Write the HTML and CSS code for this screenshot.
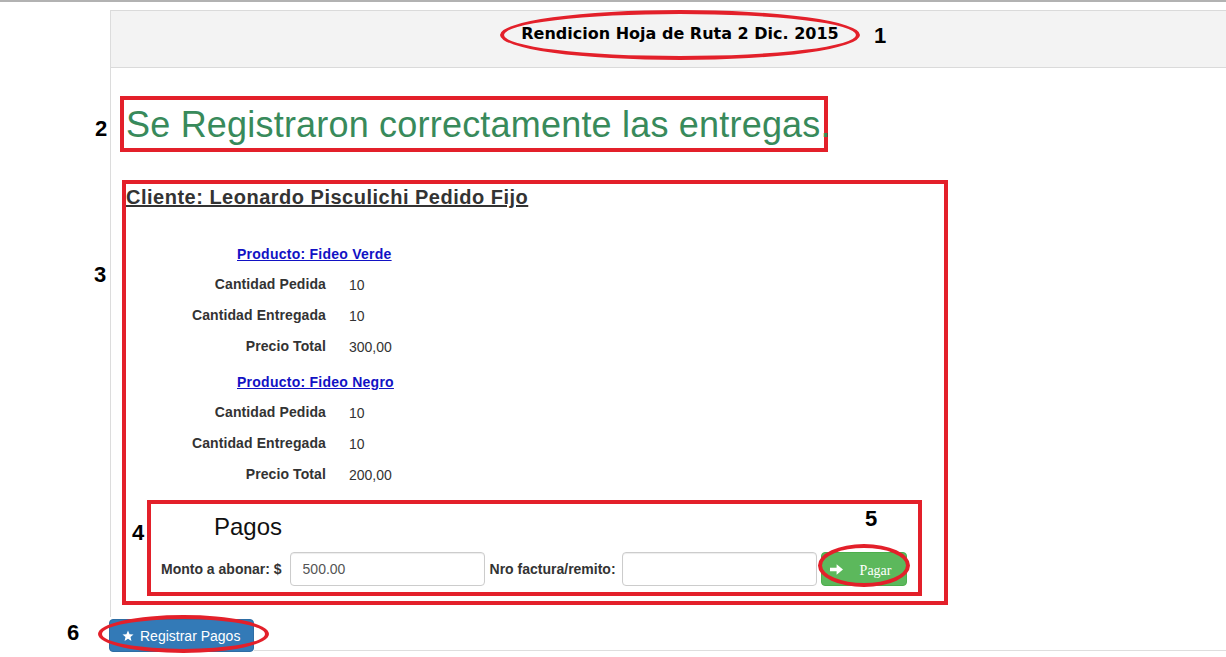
FILE: index.html
```html
<!DOCTYPE html>
<html lang="es">
<head>
<meta charset="utf-8">
<title>Rendicion Hoja de Ruta</title>
<link rel="stylesheet" href="styles.css">
</head>
<body>
<div class="screen">
  <div class="topline"></div>
  <div class="page">
    <div class="panel">
      <div class="panel-heading">Rendicion Hoja de Ruta 2 Dic. 2015</div>
      <div class="panel-body">
        <div class="mark-box msg-box">
          <h1 class="msg">Se Registraron correctamente las entregas.</h1>
        </div>
        <div class="mark-box client-box">
          <h3 class="client">Cliente: Leonardo Pisculichi Pedido Fijo</h3>
          <div class="group first">
            <div class="product"><a href="#">Producto: Fideo Verde</a></div>
            <div class="row"><span class="lbl">Cantidad Pedida</span><span class="val">10</span></div>
            <div class="row"><span class="lbl">Cantidad Entregada</span><span class="val">10</span></div>
            <div class="row"><span class="lbl">Precio Total</span><span class="val">300,00</span></div>
          </div>
          <div class="group second">
            <div class="product"><a href="#">Producto: Fideo Negro</a></div>
            <div class="row"><span class="lbl">Cantidad Pedida</span><span class="val">10</span></div>
            <div class="row"><span class="lbl">Cantidad Entregada</span><span class="val">10</span></div>
            <div class="row"><span class="lbl">Precio Total</span><span class="val">200,00</span></div>
          </div>
          <div class="mark-box pay-box">
            <div class="pay-title">Pagos</div>
            <div class="pay-form">
              <label class="f-lbl lbl-monto">Monto a abonar: $</label>
              <input class="f-input in-monto" type="text" value="500.00">
              <label class="f-lbl lbl-nro">Nro factura/remito:</label>
              <input class="f-input in-nro" type="text" value="">
              <button class="btn-pagar" type="button"><svg class="arrow" width="13" height="11" viewBox="0 0 13 11"><path d="M0 3.8h6.6V0.3L13 5.5 6.6 10.7V7.2H0z" fill="#fff"/></svg><span class="pagar-txt">Pagar</span></button>
            </div>
          </div>
        </div>
      </div>
    </div>
    <div class="actions">
      <button class="btn-reg" type="button"><svg class="star" width="12" height="12" viewBox="0 0 24 24"><path d="M12 1l3.1 7.3 7.9.6-6 5.2 1.9 7.7L12 17.7 5.1 21.8 7 14.1 1 8.9l7.9-.6z" fill="#fff"/></svg>Registrar Pagos</button>
      <div class="rule"></div>
    </div>
  </div>

  <div class="ellipse e1"></div>
  <div class="ellipse e5"></div>
  <div class="ellipse e6"></div>
  <span class="num n1">1</span>
  <span class="num n2">2</span>
  <span class="num n3">3</span>
  <span class="num n4">4</span>
  <span class="num n5">5</span>
  <span class="num n6">6</span>
</div>
</body>
</html>
```

FILE: styles.css
```css
* { box-sizing: border-box; }
html, body { margin: 0; padding: 0; background: #fff; }
body {
  font-family: "Liberation Sans", Arial, sans-serif;
  font-size: 14px;
  color: #333;
  overflow: hidden;
}
.screen {
  position: relative;
  width: 1226px;
  height: 657px;
}
.topline {
  height: 2px;
  background: #b2b2b2;
}
.page {
  padding-left: 110px;
  margin-top: 8px;
}
.panel {
  border-left: 1px solid #dcdcdc;
}
.panel-heading {
  height: 58px;
  background: #f3f3f3;
  border-top: 1px solid #dadada;
  border-bottom: 1px solid #dadada;
  padding: 13px 0 0 23px;
  text-align: center;
  font-family: "DejaVu Sans", Verdana, sans-serif;
  font-weight: bold;
  font-size: 16px;
  line-height: 20px;
  color: #000;
}
.panel-body {
  padding: 28px 0 12px 9px;
}
.mark-box {
  border: 4px solid #e3202a;
}
.msg-box {
  width: 708px;
  height: 56px;
  padding-left: 2px;
}
.msg {
  margin: 0;
  font-weight: normal;
  font-size: 36px;
  letter-spacing: 0.2px;
  line-height: 46px;
  padding-top: 2px;
  color: #388a5b;
  white-space: nowrap;
}
.client-box {
  width: 826px;
  margin: 28px 0 0 2px;
  padding-bottom: 5px;
}
.client {
  margin: 3px 0 0 0;
  font-size: 20px;
  letter-spacing: 0.5px;
  line-height: 20px;
  font-weight: bold;
  text-decoration: underline;
  color: #333;
  white-space: nowrap;
}
.group.first { margin-top: 37px; }
.group.second { margin-top: 16px; }
.product {
  padding-left: 111px;
  line-height: 20px;
  margin-bottom: 10px;
}
.product a {
  color: #1212c4;
  font-weight: bold;
  letter-spacing: 0.25px;
  text-decoration: underline;
}
.row {
  display: flex;
  line-height: 20px;
  height: 20px;
  margin-bottom: 11px;
}
.row:last-child { margin-bottom: 0; }
.lbl {
  width: 200px;
  text-align: right;
  font-weight: bold;
  letter-spacing: 0.1px;
  color: #333;
}
.val {
  margin-left: 23px;
  position: relative;
  top: 1px;
  color: #333;
}
.pay-box {
  width: 775px;
  margin: 16px 0 0 21px;
  padding: 0 0 6px 10px;
}
.pay-title {
  margin-top: 10px;
  padding-left: 53px;
  font-size: 24px;
  line-height: 26px;
  color: #111;
}
.pay-form {
  display: flex;
  align-items: center;
  margin-top: 12px;
  height: 34px;
}
.f-lbl {
  font-weight: bold;
  line-height: 20px;
  color: #333;
  white-space: nowrap;
}
.lbl-monto { margin-right: 8px; }
.lbl-nro { margin: 0 6px 0 5px; }
.f-input {
  width: 195px;
  height: 34px;
  border: 1px solid #ccc;
  border-radius: 4px;
  box-shadow: inset 0 1px 1px rgba(0,0,0,.075);
  padding: 6px 12px;
  font-family: "Liberation Sans", Arial, sans-serif;
  font-size: 14px;
  color: #555;
  background: #fff;
}
.btn-pagar {
  margin-left: 4px;
  width: 86px;
  height: 34px;
  background: #5cb85c;
  border: 1px solid #4cae4c;
  border-radius: 4px;
  display: flex;
  align-items: center;
  padding: 0 0 0 8px;
  color: #fff;
}
.arrow { flex: none; margin-right: 17px; }
.pagar-txt {
  font-family: "Liberation Serif", "Times New Roman", serif;
  font-size: 14px;
  line-height: 20px;
  padding-top: 3px;
  color: #fff;
}
.actions {
  display: flex;
  margin-top: 2px;
  margin-left: -1px;
}
.btn-reg {
  height: 33px;
  width: 145px;
  background: #337ab7;
  border: 1px solid #2e6da4;
  border-radius: 4px;
  color: #fff;
  font-family: "Liberation Sans", Arial, sans-serif;
  font-size: 14px;
  line-height: 20px;
  padding: 0 0 0 12px;
  display: flex;
  align-items: center;
  white-space: nowrap;
}
.star { margin-right: 6px; flex: none; }
.rule {
  flex: 1;
  border-bottom: 1px solid #dedede;
  margin-bottom: 1px;
}
.ellipse {
  position: absolute;
  border: 4px solid #e3202a;
  border-radius: 50%;
}
.e1 { left: 500px; top: 10px; width: 360px; height: 50px; }
.e5 { left: 818px; top: 544px; width: 92px; height: 43px; }
.e6 { left: 98px; top: 615px; width: 171px; height: 38px; }
.num {
  position: absolute;
  font-family: "Liberation Sans", Arial, sans-serif;
  font-weight: bold;
  font-size: 22px;
  line-height: 24px;
  color: #000;
}
.n1 { left: 874px; top: 24px; }
.n2 { left: 95px; top: 117px; }
.n3 { left: 94px; top: 263px; }
.n4 { left: 132px; top: 521px; }
.n5 { left: 865px; top: 507px; }
.n6 { left: 67px; top: 621px; }
```
